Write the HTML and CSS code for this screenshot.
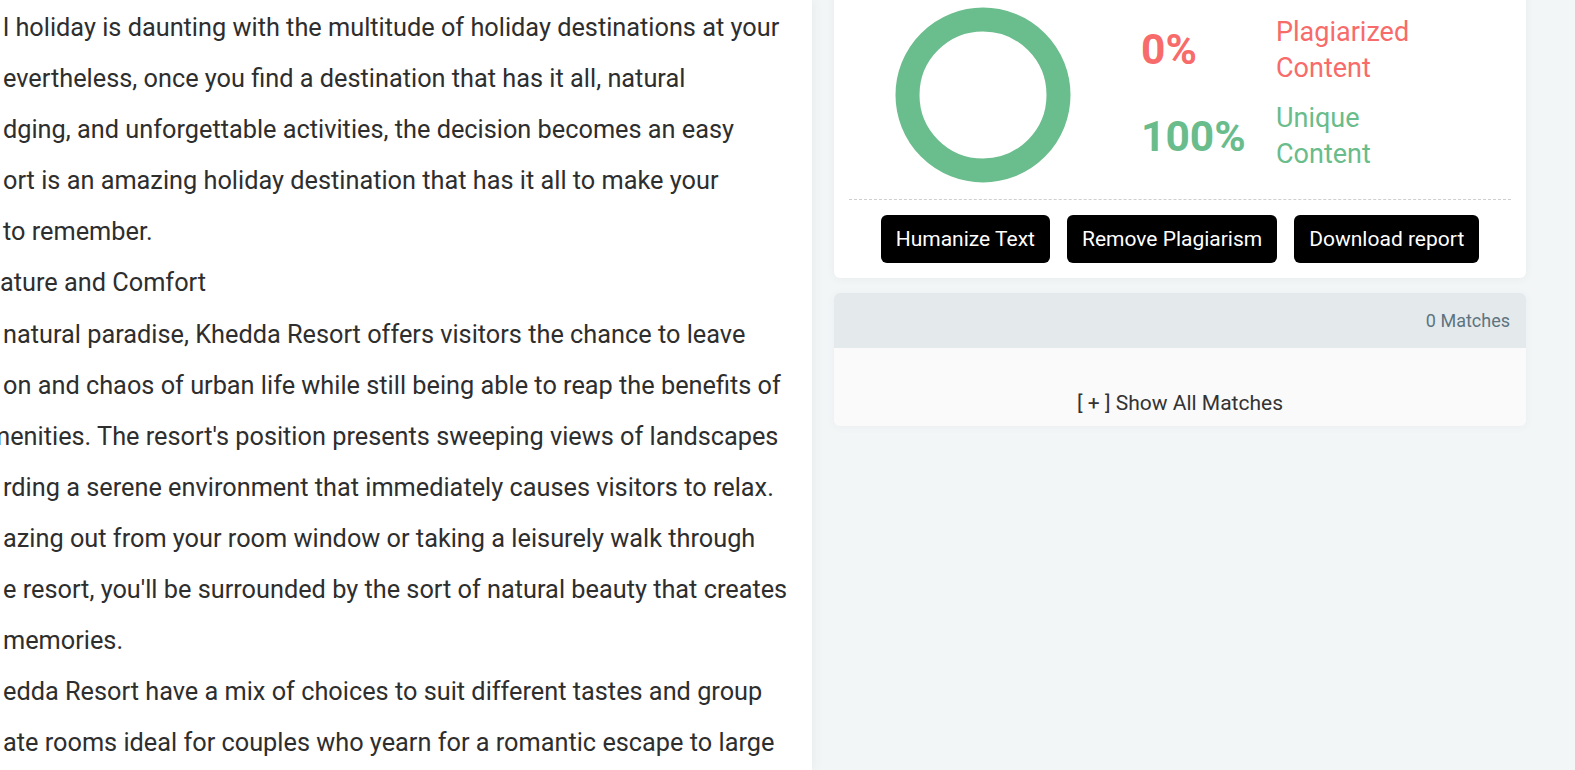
FILE: index.html
```html
<!DOCTYPE html>
<html lang="en">
<head>
  <meta charset="UTF-8" />
  <meta name="viewport" content="width=device-width, initial-scale=1.0" />
  <title>Plagiarism Report</title>
  <link rel="stylesheet" href="styles.css">
</head>
<body>
  <!-- Eingegebener Text (links, horizontal abgeschnitten) -->
  <div class="editor">
    <div class="editor-text">
      <div class="line">l holiday is daunting with the multitude of holiday destinations at your</div>
      <div class="line">evertheless, once you find a destination that has it all, natural</div>
      <div class="line">dging, and unforgettable activities, the decision becomes an easy</div>
      <div class="line">ort is an amazing holiday destination that has it all to make your</div>
      <div class="line">to remember.</div>
      <div class="line nudge">ature and Comfort</div>
      <div class="line">natural paradise, Khedda Resort offers visitors the chance to leave</div>
      <div class="line">on and chaos of urban life while still being able to reap the benefits of</div>
      <div class="line cut">menities. The resort's position presents sweeping views of landscapes</div>
      <div class="line">rding a serene environment that immediately causes visitors to relax.</div>
      <div class="line">azing out from your room window or taking a leisurely walk through</div>
      <div class="line">e resort, you'll be surrounded by the sort of natural beauty that creates</div>
      <div class="line">memories.</div>
      <div class="line">edda Resort have a mix of choices to suit different tastes and group</div>
      <div class="line">ate rooms ideal for couples who yearn for a romantic escape to large</div>
    </div>
  </div>

  <!-- Ergebnis-Spalte -->
  <div class="results">
    <div class="score-card">
      <div class="score-top">
        <svg class="donut" width="176" height="176" viewBox="0 0 176 176">
          <circle cx="88" cy="88" r="75.5" fill="none" stroke="#6abd8c" stroke-width="24" />
        </svg>
        <div class="stats">
          <div class="stat plag">
            <div class="stat-value">0%</div>
            <div class="stat-label">Plagiarized<br>Content</div>
          </div>
          <div class="stat uniq">
            <div class="stat-value">100%</div>
            <div class="stat-label">Unique<br>Content</div>
          </div>
        </div>
      </div>
      <div class="actions">
        <button class="btn">Humanize Text</button>
        <button class="btn">Remove Plagiarism</button>
        <button class="btn">Download report</button>
      </div>
    </div>

    <div class="matches">
      <div class="matches-head">0 Matches</div>
      <div class="matches-body">[ + ] Show All Matches</div>
    </div>
  </div>
</body>
</html>
```

FILE: styles.css
```css
html, body { height: 100%; }
body {
  margin: 0;
  display: flex;
  overflow: hidden;
  background: #f3f6f7;
  font-family: Roboto, "Liberation Sans", Arial, sans-serif;
  color: #2e2e2e;
}

/* Linke Spalte: Text */
.editor {
  width: 812px;
  flex-shrink: 0;
  background: #fff;
  overflow: hidden;
  box-shadow: 2px 0 10px rgba(60, 80, 90, 0.06);
  position: relative;
  z-index: 1;
}
.editor-text {
  padding: 2px 0 0 3px;
  font-size: 25.3px;
  line-height: 51.1px;
  white-space: nowrap;
}
.line.nudge { margin-left: -3px; }
.line.cut { margin-left: -15px; }

/* Rechte Spalte: Ergebnisse */
.results {
  width: 692px;
  margin-left: 22px;
  flex-shrink: 0;
}

.score-card {
  background: #fff;
  border-radius: 6px;
  margin-top: -20px;
  padding: 27px 15px 15px;
  box-shadow: 0 1px 8px rgba(60, 80, 90, 0.06);
}
.score-top {
  display: flex;
  align-items: center;
  padding: 0 0 17px 46px;
  border-bottom: 1px dashed #cfcfcf;
}
.donut { display: block; margin: 0 0 -1px; }

.stats {
  margin-left: 70px;
  display: flex;
  flex-direction: column;
  gap: 14px;
  padding-bottom: 3px;
}
.stat { display: flex; align-items: center; }
.stat-value {
  width: 135px;
  font-size: 42.5px;
  font-weight: 700;
}
.stat-label { font-size: 27px; line-height: 36.2px; }
.plag { color: #f76b6a; }
.uniq { color: #69bc8b; }

.actions {
  display: flex;
  justify-content: center;
  gap: 17px;
  padding-top: 15px;
}
.btn {
  height: 48px;
  padding: 0 15px;
  border: none;
  border-radius: 6px;
  background: #000;
  color: #fff;
  font-family: inherit;
  font-size: 21px;
  cursor: pointer;
}

/* Treffer-Liste */
.matches {
  margin-top: 15px;
  border-radius: 6px;
  overflow: hidden;
  box-shadow: 0 1px 8px rgba(60, 80, 90, 0.05);
}
.matches-head {
  height: 55px;
  line-height: 55px;
  padding-right: 16px;
  text-align: right;
  background: #e4e9ec;
  color: #5d7480;
  font-size: 18px;
}
.matches-body {
  background: #fafafa;
  padding: 43px 0 10px;
  line-height: 25px;
  text-align: center;
  font-size: 21px;
  color: #333;
}
```
